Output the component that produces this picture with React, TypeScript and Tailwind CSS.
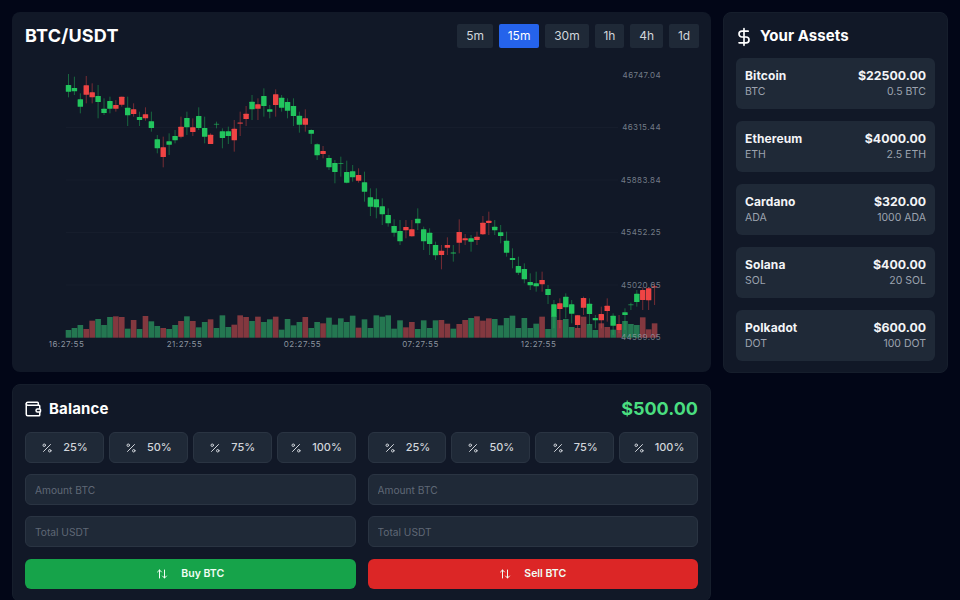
import { ArrowUpDown, DollarSign, Percent, Wallet } from "lucide-react";

type C = [number, number, number, number, number];
// [bullish, bodyTop, bodyBottom, wickTop, wickBottom] measured at 3x
const a: C[] = [
  [1,255,275,222,292],[1,264,274,230,285],[1,298,320,280,340],[0,256,284,228,310],[0,277,292,250,310],
  [1,288,306,255,355],[1,326,339,295,345],[1,303,326,290,340],[0,315,326,300,335],[0,290,314,290,320],
  [1,323,346,290,378],[0,328,342,310,350],[1,351,360,335,378],[0,343,355,322,362],[1,364,384,335,395],
  [1,418,445,405,460],[0,442,471,410,502],[1,424,434,400,465],[1,408,421,390,430],[0,380,410,350,415],
  [1,354,382,335,405],[0,382,396,355,408],[1,348,384,322,390],[1,384,410,350,430],[0,404,432,400,432],
  [1,371,374,365,385],[1,394,414,385,445],[1,394,408,380,432],[0,386,421,360,455],[0,367,372,335,408],
  [0,341,357,318,378],[1,305,328,285,360],[0,313,326,295,360],[1,288,318,265,350],[1,328,335,315,355],
  [0,283,315,268,350],[1,293,323,285,335],[1,306,332,295,355],[1,318,348,295,378],[1,347,374,335,398],
  [0,355,374,328,395],[1,390,401,388,432],[1,433,466,430,480],[0,453,462,438,475],[1,474,502,465,510],
  [1,489,516,480,550],[1,489,492,470,530],[1,516,548,482,550],[1,514,532,495,545],[0,525,542,505,548],
];
const b: C[] = [
  [1,157,185,125,215],[1,202,230,175,258],[1,208,232,175,265],[1,229,253,205,285],[1,255,280,235,290],
  [1,288,308,268,320],[1,303,334,270,345],[0,291,301,270,325],[0,298,319,270,320],[1,266,280,235,300],
  [1,298,334,290,360],[1,308,342,295,375],[1,345,376,335,390],[0,362,375,345,418],[0,345,353,322,375],
  [1,367,371,345,395],[0,306,338,268,370],[0,325,331,312,345],[1,325,335,315,365],[0,320,330,305,345],
  [0,278,313,258,315],[0,272,279,245,315],
];
const c: C[] = [
  [1,80,91,60,105],[1,97,108,75,130],[1,122,158,95,170],[1,174,180,145,205],[1,198,218,170,225],
  [1,207,238,190,250],[1,246,256,220,270],[1,250,259,215,275],[0,240,253,215,275],[1,267,285,255,312],
  [1,313,350,300,385],[0,310,327,295,385],[1,290,322,280,355],[1,313,341,300,370],[0,346,375,345,385],
  [0,294,323,290,345],[1,311,342,295,375],[1,354,361,345,385],[0,342,361,320,385],[0,317,333,295,365],
  [1,347,377,340,405],[0,372,390,345,400],[1,337,345,325,390],[1,313,316,308,330],[1,281,306,270,320],
  [0,270,300,262,330],[0,265,301,262,330],[0,258,263,250,315],
];
const candles = [
  ...a.map((d) => ({ d, o: 0 })),
  ...b.map((d) => ({ d, o: 130 })),
  ...c.map((d) => ({ d, o: 200 })),
];

const volTops = [
  420,414,405,417,392,387,405,381,379,381,416,390,417,378,394,408,414,417,405,393,
  379,393,412,396,388,414,376,411,404,376,381,393,380,396,388,380,419,387,406,396,
  381,414,396,400,383,404,385,396,377,413,388,414,376,380,376,416,391,412,396,417,
  391,414,391,390,401,416,402,390,384,379,392,385,387,406,384,377,414,384,414,401,
  380,417,378,390,387,411,414,380,402,420,400,411,419,420,393,402,405,382,418,400,
];

const yLabels: [string, number][] = [
  ["46747.04", 75],["46315.44", 127.5],["45883.84", 180],["45452.25", 232.5],["45020.65", 285],["44589.05", 337.5],
];
const xLabels: [string, number][] = [
  ["16:27:55", 66.5],["21:27:55", 184.5],["02:27:55", 302.5],["07:27:55", 420.5],["12:27:55", 538.5],
];

function Chart() {
  return (
    <svg width={675} height={320} viewBox="24 52 675 320" className="block">
      {[127.5, 180, 232.5, 285].map((y) => (
        <line key={y} x1={66} x2={618} y1={y} y2={y} stroke="#ffffff" strokeOpacity={0.025} />
      ))}
      {candles.map(({ d }, i) => {
        const bull = d[0] === 1;
        const x = 68.5 + i * 5.92;
        const top = volTops[i] / 3 + 190;
        return (
          <rect key={i} x={x - 2.8} y={top} width={5.6} height={337.7 - top} fill={bull ? "#2d9c62" : "#b0454a"} fillOpacity={0.72} />
        );
      })}
      {candles.map(({ d, o }, i) => {
        const col = d[0] === 1 ? "#22c55e" : "#ef4444";
        const x = 68.5 + i * 5.92;
        const y = (v: number) => o + v / 3;
        const h = y(d[2]) - y(d[1]);
        return (
          <g key={i}>
            <line x1={x} x2={x} y1={y(d[3])} y2={y(d[4])} stroke={col} strokeOpacity={0.45} />
            <rect x={x - 2.7} y={y(d[1])} width={5.4} height={h} fill={col} fillOpacity={h < 2 ? 0.6 : 1} rx={0.5} />
          </g>
        );
      })}
      {yLabels.map(([t, y]) => (
        <text key={t} x={661} y={y + 2.5} textAnchor="end" fontSize={8} letterSpacing={0.4} fill="#9ca3af" fillOpacity={0.72} fontFamily="Inter, sans-serif">{t}</text>
      ))}
      {xLabels.map(([t, x]) => (
        <text key={t} x={x} y={347} textAnchor="middle" fontSize={8} letterSpacing={0.5} fill="#9ca3af" fillOpacity={0.9} fontFamily="Inter, sans-serif">{t}</text>
      ))}
    </svg>
  );
}

const frames = ["5m", "15m", "30m", "1h", "4h", "1d"];
const assets = [
  ["Bitcoin", "BTC", "$22500.00", "0.5 BTC"],
  ["Ethereum", "ETH", "$4000.00", "2.5 ETH"],
  ["Cardano", "ADA", "$320.00", "1000 ADA"],
  ["Solana", "SOL", "$400.00", "20 SOL"],
  ["Polkadot", "DOT", "$600.00", "100 DOT"],
];

function TradeColumn({ label, color }: { label: string; color: string }) {
  return (
    <div className="flex flex-col">
      <div className="grid grid-cols-4 gap-[5px]">
        {["25%", "50%", "75%", "100%"].map((p) => (
          <button key={p} className="flex h-[31px] items-center justify-center gap-[10px] rounded-md border border-[#2a3442] bg-[#1f2937] text-[11px] font-medium text-[#d1d5db]">
            <Percent size={12} />
            {p}
          </button>
        ))}
      </div>
      <input placeholder="Amount BTC" className="mt-[11px] h-[31px] rounded-md border border-[#2a3442] bg-[#1f2937] px-[9px] text-[10.2px] outline-none placeholder:text-[#5f6876]" />
      <input placeholder="Total USDT" className="mt-[11px] h-[31px] rounded-md border border-[#2a3442] bg-[#1f2937] px-[9px] text-[10.2px] outline-none placeholder:text-[#5f6876]" />
      <button className={`mt-[12px] flex h-[30px] items-center justify-center gap-[13px] rounded-md text-[10.5px] font-semibold text-[#f0fdf4] ${color}`}>
        <ArrowUpDown size={12} />
        {label}
      </button>
    </div>
  );
}

export default function App() {
  return (
    <div className="h-[600px] overflow-hidden bg-[#020617] p-3 font-['Inter',sans-serif] text-white">
      <div className="grid grid-cols-4 items-start gap-3">
        <div className="col-span-3 flex flex-col gap-3">
          <div className="h-[360px] overflow-hidden rounded-lg bg-[#111827] p-3">
            <div className="flex h-[24px] items-center justify-between">
              <h2 className="pl-px text-lg font-bold tracking-[0.2px]">BTC/USDT</h2>
              <div className="flex gap-[6px]">
                {frames.map((f) => (
                  <button key={f} className={`h-[24px] rounded-[2px] px-[8.9px] text-xs ${f === "15m" ? "bg-[#2563eb] text-white" : "bg-[#1f2937] text-[#d1d5db]"}`}>
                    {f}
                  </button>
                ))}
              </div>
            </div>
            <div className="mt-1">
              <Chart />
            </div>
          </div>
          <div className="rounded-lg border border-[#161e2c] bg-[#111827] px-3 pt-3 pb-3">
            <div className="flex h-[24px] items-center justify-between">
              <div className="flex items-center gap-[7px]">
                <Wallet size={18} className="-ml-px" />
                <span className="text-[15px] font-bold tracking-[0.15px]">Balance</span>
              </div>
              <span className="text-lg font-bold text-[#4ade80]">$500.00</span>
            </div>
            <div className="mt-[11px] grid grid-cols-2 gap-3">
              <TradeColumn label="Buy BTC" color="bg-[#16a34a]" />
              <TradeColumn label="Sell BTC" color="bg-[#dc2626]" />
            </div>
          </div>
        </div>
        <div className="rounded-lg border border-[#161e2c] bg-[#111827] px-3 pt-3 pb-[11px]">
          <div className="flex h-[23px] items-center gap-[6px]">
            <DollarSign size={20} className="-ml-[2px]" />
            <span className="text-[15px] font-bold tracking-[0.05px]">Your Assets</span>
          </div>
          <div className="mt-[10px] flex flex-col gap-3">
            {assets.map(([n, s, v, q]) => (
              <div key={n} className="flex h-[51px] items-center justify-between rounded-md bg-[#1f2937] px-[9px]">
                <div>
                  <div className="text-xs leading-[17px] font-bold tracking-[0.1px] text-[#f3f4f6]">{n}</div>
                  <div className="text-[10.5px] leading-[16px] text-[#9ca3af]">{s}</div>
                </div>
                <div className="text-right">
                  <div className="text-[12.3px] leading-[17px] font-bold text-[#f3f4f6]">{v}</div>
                  <div className="text-[10.5px] leading-[16px] text-[#9ca3af]">{q}</div>
                </div>
              </div>
            ))}
          </div>
        </div>
      </div>
    </div>
  );
}
